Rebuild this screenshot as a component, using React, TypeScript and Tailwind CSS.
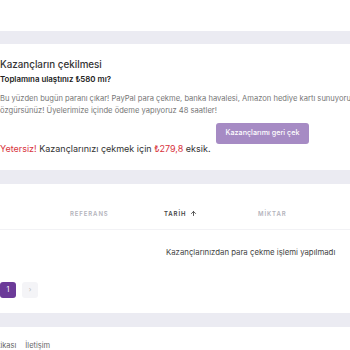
import { ArrowUp } from "lucide-react";

export default function App() {
    return (
        <div className="w-[350px] h-[350px] overflow-hidden bg-white font-['Inter',sans-serif]">
            <div className="w-[420px]">
                {/* üst boşluk */}
                <div className="h-[31px]" />
                <div className="h-[13px] bg-[#ebebf2]" />

                {/* kazanç kartı */}
                <div className="pt-[14px] pb-[15px]">
                    <h2 className="text-[9.8px] leading-[14px] font-medium text-[#333]">Kazançların çekilmesi</h2>
                    <p className="mt-[2px] text-[7.9px] leading-[10px] font-semibold text-[#222]">Toplamına ulaştınız ₺580 mı?</p>
                    <p className="mt-[9px] text-[7.6px] leading-[12px] text-[#777] whitespace-nowrap">
                        Bu yüzden bugün paranı çıkar! PayPal para çekme, banka havalesi, Amazon hediye kartı sunuyoruz, seçmekte
                        <br />
                        özgürsünüz! Üyelerimize içinde ödeme yapıyoruz 48 saatler!
                    </p>
                    <button className="mt-[5px] ml-[216px] w-[93px] h-[21px] rounded-[3px] bg-[#a68bc4] text-white text-[7.2px] font-medium whitespace-nowrap">
                        Kazançlarımı geri çek
                    </button>
                    <p className="-mt-[1px] text-[9px] leading-[12px] text-[#333]">
                        <span className="text-[#d8333d]">Yetersiz!</span> Kazançlarınızı çekmek için <span className="text-[#d8333d]">₺279,8</span> eksik.
                    </p>
                </div>

                <div className="h-[14px] bg-[#ebebf2]" />

                {/* tablo */}
                <div className="pt-[25px]">
                    <div className="flex pl-[70px] pb-[10px] border-b border-[#f2f2f5] text-[6px] leading-[10px] font-semibold tracking-[0.15em]">
                        <span className="w-[94px] text-[#b3b3bb]">REFERANS</span>
                        <span className="w-[94px] text-[#444] flex items-center gap-[4px]">
                            TARİH <ArrowUp size={7} strokeWidth={3} />
                        </span>
                        <span className="w-[94px] text-[#b3b3bb]">MİKTAR</span>
                    </div>
                    <p className="pl-[166px] pt-[16px] text-[7.8px] leading-[12px] text-[#444] whitespace-nowrap">Kazançlarınızdan para çekme işlemi yapılmadı</p>
                </div>

                {/* sayfalama */}
                <div className="flex gap-[6px] mt-[24px]">
                    <div className="w-[16px] h-[16px] rounded-[3px] bg-[#6b3a98] text-white text-[7px] flex items-center justify-center">1</div>
                    <div className="w-[16px] h-[16px] rounded-[3px] bg-[#f4f4f7] text-[#bbb] text-[7px] flex items-center justify-center">›</div>
                </div>

                <div className="mt-[15px] h-[14px] bg-[#ebebf2]" />

                {/* alt bilgi */}
                <div className="flex gap-[9px] pt-[13px] text-[7.5px] leading-[12px] text-[#666] -ml-[40px]">
                    <span>Gizlilik Politikası</span>
                    <span>İletişim</span>
                </div>
            </div>
        </div>
    );
}
